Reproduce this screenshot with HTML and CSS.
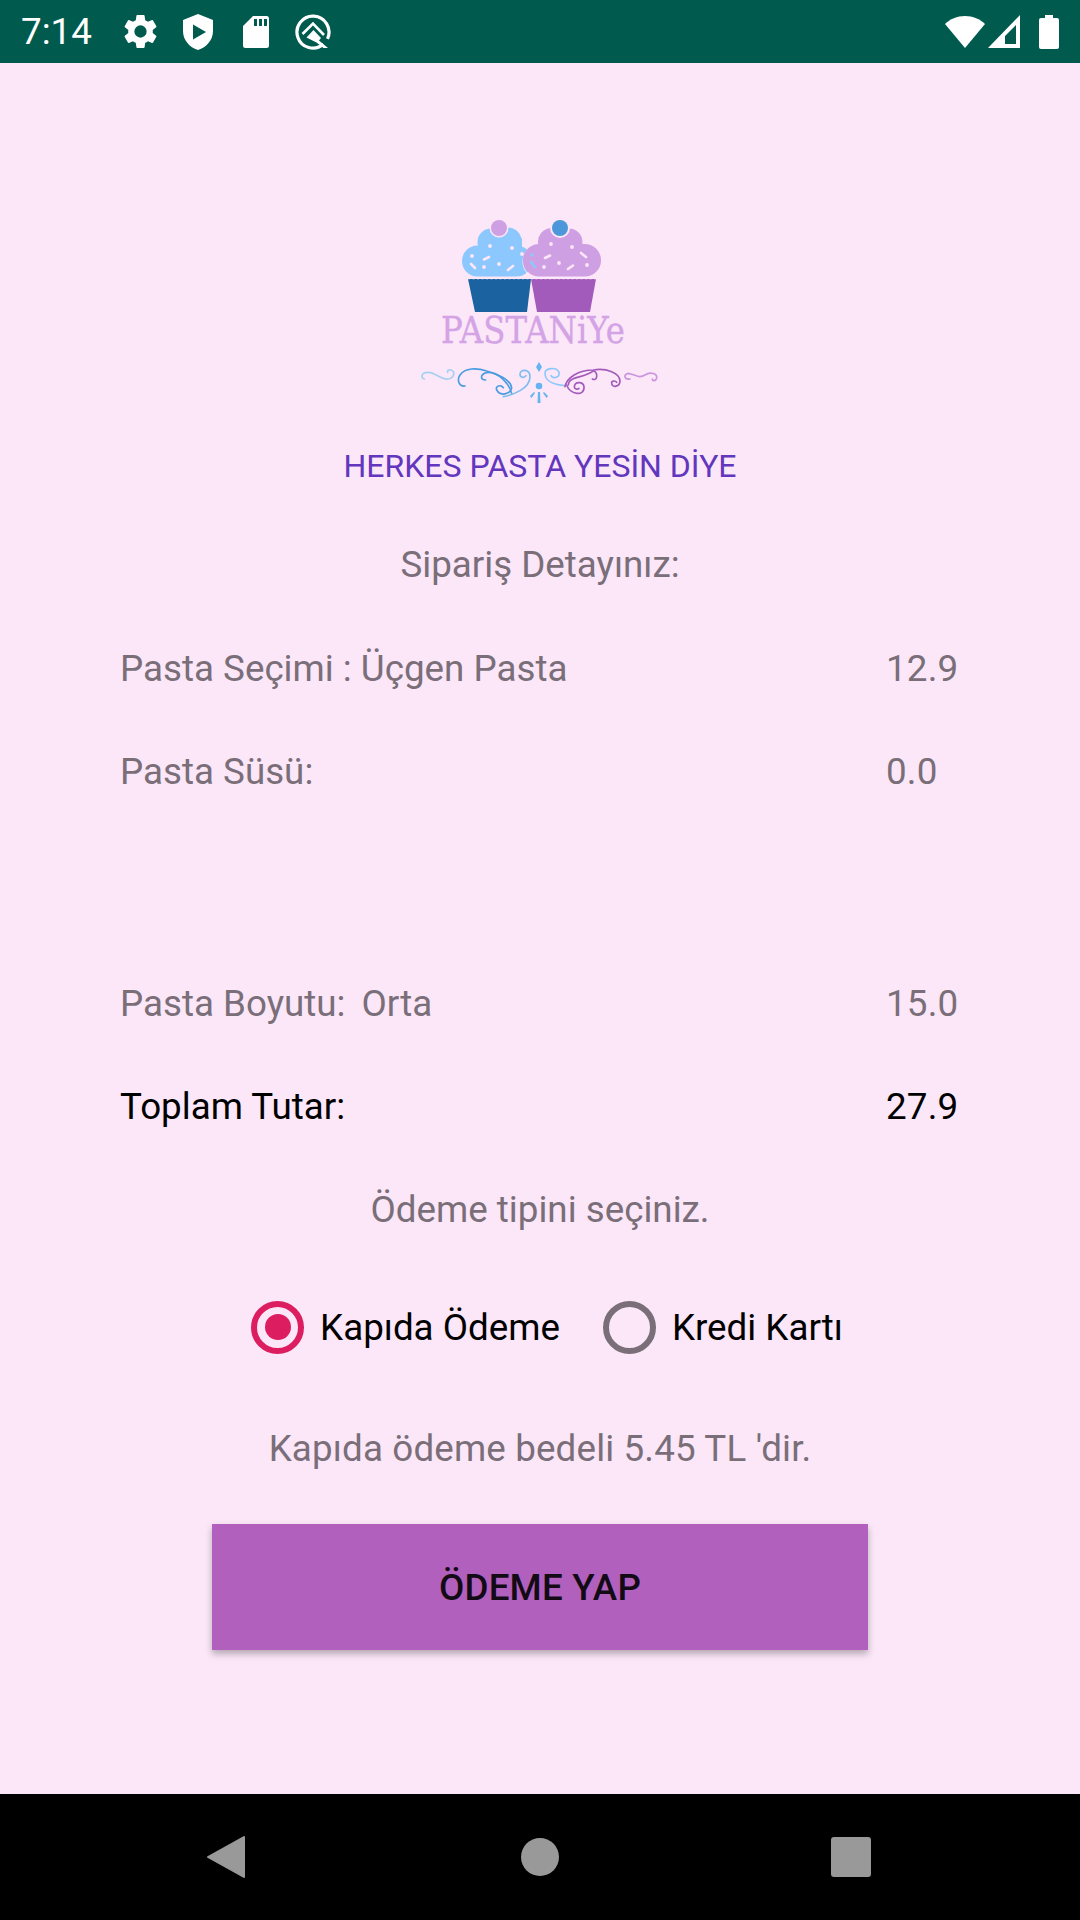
FILE: index.html
```html
<!DOCTYPE html>
<html lang="tr">
<head>
<meta charset="utf-8">
<title>Pastaniye</title>
<link rel="stylesheet" href="styles.css">
</head>
<body>
<div class="screen">
  <header class="status">
    <div class="status-left">
      <span class="time">7:14</span>
      <svg class="ic gear" viewBox="0 0 24 24"><path fill="#fff" d="M19.14 12.94c.04-.3.06-.61.06-.94 0-.32-.02-.64-.07-.94l2.03-1.58a.49.49 0 0 0 .12-.61l-1.92-3.32a.49.49 0 0 0-.59-.22l-2.39.96c-.5-.38-1.03-.7-1.62-.94l-.36-2.54a.48.48 0 0 0-.48-.41h-3.84a.47.47 0 0 0-.47.41l-.36 2.54c-.59.24-1.13.57-1.62.94l-2.39-.96a.48.48 0 0 0-.59.22L2.74 8.87a.47.47 0 0 0 .12.61l2.03 1.58c-.05.3-.09.63-.09.94s.02.64.07.94l-2.03 1.58a.49.49 0 0 0-.12.61l1.92 3.32c.12.22.37.29.59.22l2.39-.96c.5.38 1.03.7 1.62.94l.36 2.54c.05.24.24.41.48.41h3.84c.24 0 .44-.17.47-.41l.36-2.54c.59-.24 1.13-.56 1.62-.94l2.39.96c.22.08.47 0 .59-.22l1.92-3.32a.47.47 0 0 0-.12-.61l-2.01-1.58zM12 15.6A3.6 3.6 0 1 1 12 8.4a3.6 3.6 0 0 1 0 7.2z"/></svg>
      <svg class="ic shield" viewBox="0 0 30 36"><path fill="#fff" fill-rule="evenodd" d="M15 0 0 6v11c0 9 6.4 16.300 15 19 8.600-2.700 15-10 15-19V6L15 0zM10 10.500 23 18l-13 7.500z"/></svg>
      <svg class="ic sd" viewBox="0 0 26 32"><path fill="#fff" fill-rule="evenodd" d="M10 0h14a2.500 2.500 0 0 1 2 2.500v27a2.500 2.500 0 0 1-2.500 2.500h-21A2.500 2.500 0 0 1 0 29.500V10zM11 3v7h3V3zM16 3v7h3V3zM21 3v7h3V3z"/></svg>
      <svg class="ic q" viewBox="0 0 36 36">
        <path fill="none" stroke="#fff" stroke-width="3.200" d="M28.300 30.300A16 16 0 1 1 32.500 24.800"/>
        <path fill="none" stroke="#fff" stroke-width="2.600" d="M7.500 20 18 9.500 29 21"/>
        <path fill="#fff" d="M11.500 23.500 18.500 16l7.500 8-2 2.500 9 7.500h-4.500l-7-5.500z"/>
      </svg>
    </div>
    <div class="status-right">
      <svg class="ic wifi" viewBox="0 0 40 32"><path fill="#fff" d="M20 32 0 8C5 3 12 0 20 0s15 3 20 8z"/></svg>
      <svg class="ic signal" viewBox="0 0 32 33"><path fill="#fff" fill-rule="evenodd" d="M32 0v33H0zM28 10 17 21v8h11z"/></svg>
      <svg class="ic battery" viewBox="0 0 20 34"><path fill="#fff" d="M6 0h8v3h4a2 2 0 0 1 2 2v27a2 2 0 0 1-2 2H2a2 2 0 0 1-2-2V5a2 2 0 0 1 2-2h4z"/></svg>
    </div>
  </header>

  <main class="content">
    <svg class="logo" viewBox="0 0 280 210">
      <g fill="#8cc8fe">
        <circle cx="91" cy="42" r="13.500"/><circle cx="108" cy="41" r="13.500"/>
        <rect x="78" y="38" width="44" height="20"/>
        <rect x="62" y="45.500" width="70" height="31" rx="15.500"/>
      </g>
      <path fill="none" stroke="#fbe7f8" stroke-width="1" d="M131 46c-6 5-8 11-8 16 0 6 3 11 8 14"/>
      <g fill="#cf9fe4">
        <circle cx="152" cy="42" r="14"/><circle cx="169" cy="42" r="13.500"/>
        <rect x="140" y="38" width="40" height="20"/>
        <rect x="123" y="44" width="78" height="32.500" rx="16"/>
      </g>
      <circle cx="99" cy="28" r="9.500" fill="#fbe7f8"/><circle cx="99" cy="28" r="8" fill="#cf9fe4"/>
      <circle cx="160" cy="28" r="10" fill="#fbe7f8"/><circle cx="160" cy="28" r="8" fill="#4b97d9"/>
      <g fill="#fbe7f8">
        <circle cx="72" cy="56" r="1.900"/><circle cx="90" cy="46" r="1.900"/><circle cx="112" cy="48" r="1.900"/><circle cx="122" cy="54" r="1.900"/><circle cx="84" cy="67" r="1.900"/><circle cx="99" cy="64" r="1.900"/>
        <circle cx="151" cy="44" r="1.900"/><circle cx="172" cy="47" r="1.900"/><circle cx="144" cy="67" r="1.900"/><circle cx="159" cy="63" r="1.900"/><circle cx="187" cy="65" r="1.900"/>
      </g>
      <g stroke="#fbe7f8" stroke-width="2.600" stroke-linecap="round">
        <path d="M71 64l4 4M84 59.500l5-2.500M108 70l5-4M145 58l5-2.500M181 53l5 4M168 69l5-3.500"/>
      </g>
      <circle cx="132" cy="55" r="1.800" fill="#8cc8fe"/>
      <path stroke="#8cc8fe" stroke-width="2.600" stroke-linecap="round" d="M131 62l4 5"/>
      <path fill="#1a62a0" d="M68 79h63l-4 33H75z"/>
      <path fill="#a35bbb" d="M131 79h65l-6 33h-53z"/>
      <path fill="none" stroke="#fbe7f8" stroke-width="1.500" stroke-dasharray="2 2.500" d="M68 78.500h128"/>
      <text class="logo-text" x="41" y="143" textLength="184" lengthAdjust="spacingAndGlyphs">PASTANiYe</text>
      <g class="flourish" transform="translate(15 155) scale(.3333)">
        <path stroke="#a6d0f2" d="M28 72C15 68 20 52 38 52 60 50 75 75 100 72 118 68 122 50 108 45 100 43 96 48 98 52"/>
        <path stroke="#4b9ce0" d="M150 93C132 95 125 75 135 60 150 38 185 38 215 48 245 55 290 75 290 100 285 118 255 125 245 105 240 92 258 88 265 98"/>
        <path stroke="#4b9ce0" d="M212 75C195 75 195 58 215 53 250 48 285 90 290 115"/>
        <path stroke="#7fbdf0" d="M265 125C295 120 345 100 345 65 345 42 315 40 315 58 315 68 328 70 333 62"/>
      </g>
      <g class="flourish" transform="translate(135 155) scale(.3333)">
        <path stroke="#8dc8fa" d="M90 92C60 90 30 80 30 55 30 38 65 35 72 52 75 68 55 72 48 62"/>
        <path stroke="#a35bbb" d="M90 95C95 68 130 45 175 45 215 38 255 55 255 78 255 95 232 100 230 85 228 78 240 75 245 82"/>
        <path stroke="#a35bbb" d="M95 90C105 120 150 125 147 95 145 80 120 78 118 95 118 102 128 105 132 100"/>
        <path stroke="#a35bbb" d="M100 90C100 62 150 70 175 48 190 52 188 80 172 72"/>
        <path stroke="#cb94de" d="M285 72C270 75 262 60 280 55 300 58 310 72 330 60 345 50 368 55 365 70 362 80 352 78 352 72"/>
      </g>
      <g fill="#64b4f0">
        <path d="M139 162l3 5-3 5-3-5z"/><circle cx="139" cy="186" r="3.300"/>
        <path d="M138 192h2l.500 11h-3zM130 196l4-4 1 1-3.500 5zM148 196l-4-4-1 1 3.500 5z"/>
      </g>
    </svg>
    <p class="tagline">HERKES PASTA YESİN DİYE</p>
    <p class="line center muted">Sipariş Detayınız:</p>
    <div class="line row muted"><span class="label">Pasta Seçimi : Üçgen Pasta</span><span class="value">12.9</span></div>
    <div class="line row muted"><span class="label">Pasta Süsü:</span><span class="value">0.0</span></div>
    <div class="spacer"></div>
    <div class="line row muted"><span class="label">Pasta Boyutu:<span class="size-name">Orta</span></span><span class="value">15.0</span></div>
    <div class="line row"><span class="label">Toplam Tutar:</span><span class="value">27.9</span></div>
    <p class="line center muted">Ödeme tipini seçiniz.</p>
    <div class="radios">
      <div class="radio"><span class="dot on"></span><span>Kapıda Ödeme</span></div>
      <div class="radio"><span class="dot"></span><span>Kredi Kartı</span></div>
    </div>
    <p class="line center muted fee">Kapıda ödeme bedeli 5.45 TL 'dir.</p>
    <button class="pay">ÖDEME YAP</button>
  </main>

  <nav class="navbar">
    <svg class="back" viewBox="0 0 38 42"><path fill="#999" stroke="#999" stroke-width="2" stroke-linejoin="round" d="M37 1v40L1 21z"/></svg>
    <span class="home"></span>
    <span class="recent"></span>
  </nav>
</div>
</body>
</html>
```

FILE: styles.css
```css
* { box-sizing: border-box; }
html, body { margin: 0; padding: 0; }
body { font-family: Roboto, "Noto Sans", sans-serif; color: #000; background: #fbe7f8; }
p { margin: 0; }
.screen { width: 1080px; height: 1920px; display: flex; flex-direction: column; overflow: hidden; }

.status { height: 63px; flex: none; background: #005a4e; display: flex; justify-content: space-between; align-items: center; padding: 0 21px; }
.status-left, .status-right { display: flex; align-items: center; }
.time { color: #fff; font-size: 36.750px; width: 99px; }
.ic { display: block; flex: none; }
.gear { width: 41px; height: 41px; margin-right: 22px; }
.shield { width: 30px; height: 36px; margin-right: 30px; }
.sd { width: 26px; height: 32px; margin-right: 26px; }
.q { width: 36px; height: 36px; }
.wifi { width: 40px; height: 32px; margin-right: 3px; }
.signal { width: 32px; height: 33px; margin-right: 19px; }
.battery { width: 20px; height: 34px; }

.content { flex: 1; display: flex; flex-direction: column; align-items: center; padding-top: 137px; }
.logo { width: 280px; height: 210px; flex: none; }
.tagline { margin-top: 35px; height: 43px; line-height: 43px; font-size: 32px; color: #6236bd; }
.line { width: 100%; height: 103px; line-height: 103px; font-size: 36.750px; }
.center { text-align: center; }
.muted { color: #7a6e79; }
.row { display: flex; padding-left: 120px; }
.label { width: 766px; flex: none; }
.size-name { margin-left: 16px; }
.value { letter-spacing: .2px; }
.spacer { height: 129px; flex: none; }
.tagline + .line { margin-top: 25px; margin-bottom: 1px; }

.radios { display: flex; margin-top: 22px; height: 88px; align-items: center; font-size: 36.750px; padding-left: 14px; }
.radio { display: flex; align-items: center; }
.radio + .radio { margin-left: 43px; }
.dot { width: 53px; height: 53px; border: 6px solid #7a6e79; border-radius: 50%; margin-right: 16px; display: block; position: relative; flex: none; }
.dot.on { border-color: #dc1e60; }
.dot.on::after { content: ""; position: absolute; inset: 7.500px; background: #dc1e60; border-radius: 50%; }

.fee { margin-top: 26px; letter-spacing: .15px; }
.pay { width: 656px; height: 126px; margin-top: 24px; border: 0; background: #b160be; color: #120a14; font: 500 36.750px Roboto, sans-serif; letter-spacing: .2px; box-shadow: 0 4px 7px rgba(0,0,0,.28); }

.navbar { height: 126px; flex: none; background: #000; display: flex; align-items: center; justify-content: space-between; padding: 0 209px 0 207px; }
.back { width: 38px; height: 42px; display: block; }
.home { width: 38px; height: 38px; margin-left: 4px; border-radius: 50%; background: #999; }
.recent { width: 40px; height: 40px; border-radius: 3px; background: #999; }

.logo-text { font-family: "DejaVu Serif", serif; font-size: 38px; fill: #d3a3e6; stroke: #d3a3e6; stroke-width: .4px; }
.flourish { fill: none; stroke-width: 5; stroke-linecap: round; }
```
